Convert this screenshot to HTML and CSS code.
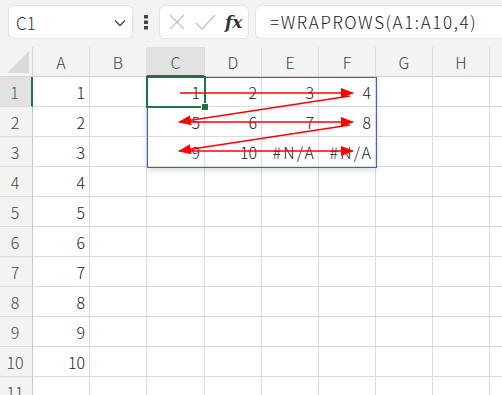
FILE: index.html
```html
<!DOCTYPE html>
<html lang="ja">
<head>
    <meta charset="UTF-8">
    <title>WRAPROWS</title>
    <link rel="stylesheet" href="styles.css">
</head>
<body>
    <div class="bar">
        <div class="namebox">
            <span>C1</span>
            <svg class="chev" width="12" height="8" viewBox="0 0 12 8"><path d="M1 1.5 L6 6.5 L11 1.5" fill="none" stroke="#444" stroke-width="1.3"/></svg>
        </div>
        <svg class="dots" width="4" height="15" viewBox="0 0 4 15">
            <rect x="0" y="0" width="4" height="3.5" fill="#444"/>
            <rect x="0" y="5.5" width="4" height="3.5" fill="#444"/>
            <rect x="0" y="11" width="4" height="3.5" fill="#444"/>
        </svg>
        <div class="fxbox">
            <svg width="18" height="18" viewBox="0 0 18 18"><path d="M2 2 L16 16 M16 2 L2 16" stroke="#c3c3c3" stroke-width="1.4"/></svg>
            <svg width="22" height="18" viewBox="0 0 22 18"><path d="M2 10 L8 16 L21 2" fill="none" stroke="#c3c3c3" stroke-width="1.4"/></svg>
            <span class="fx">fx</span>
        </div>
        <div class="formula">=WRAPROWS(A1:A10,4)</div>
    </div>

    <div class="sheet">
        <div class="grid">
            <div class="corner"><svg width="22" height="22" viewBox="0 0 22 22"><path d="M22 0 L22 22 L0 22 Z" fill="#d9d9d9"/></svg></div>
            <div class="colh">A</div><div class="colh">B</div><div class="colh sel">C</div><div class="colh">D</div>
            <div class="colh">E</div><div class="colh">F</div><div class="colh">G</div><div class="colh">H</div><div class="colh"></div>

            <div class="rowh sel">1</div><div class="cell">1</div><div class="cell"></div><div class="cell">1</div><div class="cell">2</div>
            <div class="cell">3</div><div class="cell">4</div><div class="cell"></div><div class="cell"></div><div class="cell"></div>

            <div class="rowh">2</div><div class="cell">2</div><div class="cell"></div><div class="cell">5</div><div class="cell">6</div>
            <div class="cell">7</div><div class="cell">8</div><div class="cell"></div><div class="cell"></div><div class="cell"></div>

            <div class="rowh">3</div><div class="cell">3</div><div class="cell"></div><div class="cell">9</div><div class="cell">10</div>
            <div class="cell"><span class="na">#N/A</span></div><div class="cell"><span class="na">#N/A</span></div><div class="cell"></div><div class="cell"></div><div class="cell"></div>

            <div class="rowh">4</div><div class="cell">4</div><div class="cell"></div><div class="cell"></div><div class="cell"></div>
            <div class="cell"></div><div class="cell"></div><div class="cell"></div><div class="cell"></div><div class="cell"></div>

            <div class="rowh">5</div><div class="cell">5</div><div class="cell"></div><div class="cell"></div><div class="cell"></div>
            <div class="cell"></div><div class="cell"></div><div class="cell"></div><div class="cell"></div><div class="cell"></div>

            <div class="rowh">6</div><div class="cell">6</div><div class="cell"></div><div class="cell"></div><div class="cell"></div>
            <div class="cell"></div><div class="cell"></div><div class="cell"></div><div class="cell"></div><div class="cell"></div>

            <div class="rowh">7</div><div class="cell">7</div><div class="cell"></div><div class="cell"></div><div class="cell"></div>
            <div class="cell"></div><div class="cell"></div><div class="cell"></div><div class="cell"></div><div class="cell"></div>

            <div class="rowh">8</div><div class="cell">8</div><div class="cell"></div><div class="cell"></div><div class="cell"></div>
            <div class="cell"></div><div class="cell"></div><div class="cell"></div><div class="cell"></div><div class="cell"></div>

            <div class="rowh">9</div><div class="cell">9</div><div class="cell"></div><div class="cell"></div><div class="cell"></div>
            <div class="cell"></div><div class="cell"></div><div class="cell"></div><div class="cell"></div><div class="cell"></div>

            <div class="rowh">10</div><div class="cell">10</div><div class="cell"></div><div class="cell"></div><div class="cell"></div>
            <div class="cell"></div><div class="cell"></div><div class="cell"></div><div class="cell"></div><div class="cell"></div>

            <div class="rowh">11</div><div class="cell"></div><div class="cell"></div><div class="cell"></div><div class="cell"></div>
            <div class="cell"></div><div class="cell"></div><div class="cell"></div><div class="cell"></div><div class="cell"></div>
        </div>

        <div class="spill"></div>
        <div class="active"><span class="handle"></span></div>

        <svg class="arrows" width="502" height="348" viewBox="0 47 502 348">
            <defs>
                <marker id="head" markerUnits="userSpaceOnUse" markerWidth="13" markerHeight="10" refX="12" refY="5" orient="auto">
                    <path d="M0 0 L13 5 L0 10 Z" fill="#ff0000"/>
                </marker>
            </defs>
            <g stroke="#ff0000" stroke-width="1.5" fill="none" marker-end="url(#head)">
                <line x1="180" y1="93" x2="353" y2="93"/>
                <line x1="350" y1="96" x2="179" y2="122"/>
                <line x1="181" y1="122" x2="353" y2="122"/>
                <line x1="350" y1="125" x2="179" y2="151"/>
                <line x1="181" y1="151" x2="353" y2="151"/>
            </g>
        </svg>
    </div>
</body>
</html>
```

FILE: styles.css
```css
body {
    margin: 0;
    width: 502px;
    height: 395px;
    overflow: hidden;
    background-color: #ffffff;
    font-family: "Noto Sans CJK JP", "Noto Sans", sans-serif;
    color: #222;
}
.bar {
    height: 47px;
    box-sizing: border-box;
    padding: 5px 0 0 8px;
    display: flex;
    align-items: flex-start;
    background-color: #f3f3f3;
}
.namebox {
    width: 125px;
    height: 34px;
    box-sizing: border-box;
    display: flex;
    align-items: center;
    justify-content: space-between;
    padding: 0 6px 0 7px;
    background-color: #ffffff;
    border: 1px solid #e3e3e3;
    border-radius: 6px;
    font-size: 17px;
    font-weight: 300;
    color: #333;
}
.chev {
    margin-top: 2px;
}
.dots {
    margin: 10px 0 0 11px;
}
.fxbox {
    width: 90px;
    height: 34px;
    box-sizing: border-box;
    margin-left: 11px;
    display: flex;
    align-items: center;
    gap: 8px;
    padding-left: 8px;
    background-color: #ffffff;
    border: 1px solid #e3e3e3;
    border-radius: 6px;
}
.fx {
    font-family: "DejaVu Serif", "Liberation Serif", serif;
    font-style: italic;
    font-weight: bold;
    font-size: 17px;
    color: #333;
    margin-left: 1px;
}
.formula {
    flex: 1;
    height: 34px;
    box-sizing: border-box;
    margin-left: 6px;
    padding-left: 14px;
    line-height: 32px;
    font-size: 17px;
    font-weight: 300;
    letter-spacing: 1.6px;
    color: #222;
    background-color: #ffffff;
    border: 1px solid #e3e3e3;
    border-right: none;
    border-radius: 6px 0 0 6px;
}
.sheet {
    position: relative;
}
.grid {
    display: grid;
    grid-template-columns: 33px 57px 57px 58px 57px 57px 57px 57px 57px 20px;
    grid-auto-rows: 30px;
}
.corner, .colh, .rowh, .cell {
    box-sizing: border-box;
}
.corner {
    background-color: #f3f3f3;
    border-right: 1px solid #d6d6d6;
    border-bottom: 1px solid #d6d6d6;
    display: flex;
    align-items: flex-end;
    justify-content: flex-end;
    padding: 0 3px 3px 0;
}
.colh {
    background-color: #f3f3f3;
    border-right: 1px solid #dcdcdc;
    border-bottom: 1px solid #d0d0d0;
    text-align: center;
    line-height: 30px;
    font-size: 16px;
    font-weight: 300;
    color: #444;
}
.colh.sel {
    background-color: #e1e1e1;
    border-bottom: 2px solid #217346;
    color: #217346;
}
.rowh {
    background-color: #f3f3f3;
    border-right: 1px solid #c8c8c8;
    border-bottom: 1px solid #dcdcdc;
    text-align: center;
    line-height: 30px;
    font-size: 16px;
    font-weight: 300;
    color: #444;
    padding-right: 2px;
}
.rowh.sel {
    background-color: #e1e1e1;
    border-right: 2px solid #217346;
    color: #217346;
}
.cell {
    border-right: 1px solid #dadada;
    border-bottom: 1px solid #dadada;
    text-align: right;
    padding-right: 4px;
    line-height: 31px;
    font-size: 16px;
    font-weight: 300;
    color: #222;
}
.na {
    letter-spacing: 2.2px;
    margin-right: -2.2px;
}
.spill {
    position: absolute;
    left: 147px;
    top: 30px;
    width: 230px;
    height: 91px;
    box-sizing: border-box;
    border: 1px solid #3a64c0;
    box-shadow: 0 3px 6px rgba(0, 0, 0, 0.12);
}
.active {
    position: absolute;
    left: 146px;
    top: 29px;
    width: 60px;
    height: 32px;
    box-sizing: border-box;
    border: 2px solid #217346;
}
.handle {
    position: absolute;
    right: -5px;
    bottom: -5px;
    width: 6px;
    height: 6px;
    background-color: #217346;
    border: 1px solid #ffffff;
}
.arrows {
    position: absolute;
    left: 0;
    top: 0;
}
```
